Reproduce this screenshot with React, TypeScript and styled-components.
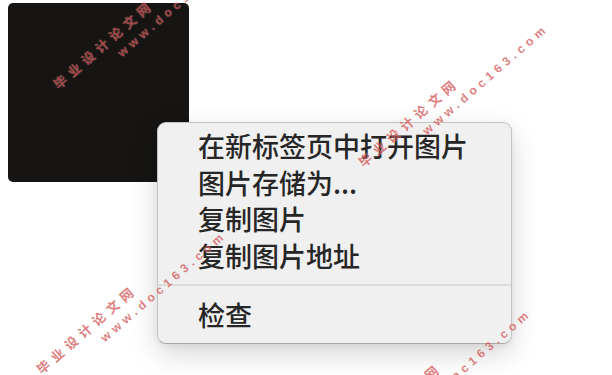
import React from "react";
import styled, { createGlobalStyle } from "styled-components";

const Global = createGlobalStyle`
  html, body { margin: 0; padding: 0; background: #ffffff; }
  body { font-family: "Noto Sans CJK SC", "Noto Sans", sans-serif; }
`;

const Stage = styled.div`
  position: relative;
  width: 612px;
  height: 375px;
  overflow: hidden;
  box-sizing: border-box;
  padding: 3px 0 0 8px;
  background: #ffffff;
`;

const Thumb = styled.div`
  width: 181px;
  height: 179px;
  border-radius: 5px;
  background: #161513;
`;

const Menu = styled.div`
  position: absolute;
  left: 157px;
  top: 122px;
  width: 355px;
  box-sizing: border-box;
  padding: 5px 0 9.5px;
  background: #f0f0f0;
  border: 1px solid #c4c4c4;
  border-bottom-color: #a8a8a8;
  border-radius: 9px;
  box-shadow: 0 10px 28px rgba(0, 0, 0, 0.16), 0 2px 6px rgba(0, 0, 0, 0.06);
  display: flex;
  flex-direction: column;
`;

const Item = styled.div`
  height: 36.5px;
  display: flex;
  align-items: center;
  padding-left: 40px;
  font-family: "Noto Sans CJK SC", sans-serif;
  font-size: 27px;
  font-weight: 500;
  line-height: 36.5px;
  color: #262626;
  white-space: nowrap;
`;

const Separator = styled.div`
  height: 2px;
  margin: 10px 0 11px;
  background: #dadada;
`;

const Watermark = styled.div<{ $x: number; $y: number }>`
  position: absolute;
  left: ${(p) => p.$x - 6.5}px;
  top: ${(p) => p.$y}px;
  transform: rotate(-41deg);
  transform-origin: 6.5px 0;
  pointer-events: none;
  color: rgba(200, 38, 38, 0.6);
  text-shadow: 0 0 1px rgba(255, 255, 255, 0.45);
  white-space: nowrap;
`;

const MarkTitle = styled.div`
  margin-top: -7px;
  height: 14px;
  line-height: 14px;
  font-family: "Noto Sans CJK SC", sans-serif;
  font-weight: 700;
  font-size: 13px;
  letter-spacing: 5.3px;
`;

const MarkUrl = styled.div`
  margin-top: 4px;
  margin-left: 69px;
  height: 14px;
  line-height: 14px;
  font-family: "Liberation Sans", Arial, sans-serif;
  font-weight: 700;
  font-size: 12px;
  letter-spacing: 4.4px;
`;

const items = ["在新标签页中打开图片", "图片存储为...", "复制图片", "复制图片地址"];

const marks = [
  { x: 60, y: 82 },
  { x: 365, y: 160 },
  { x: 43, y: 367 },
  { x: 348, y: 445 },
];

export default function App() {
  return (
    <>
      <Global />
      <Stage>
        <Thumb />
        <Menu>
          {items.map((t) => (
            <Item key={t}>{t}</Item>
          ))}
          <Separator />
          <Item>检查</Item>
        </Menu>
        {marks.map((m, i) => (
          <Watermark key={i} $x={m.x} $y={m.y}>
            <MarkTitle>毕业设计论文网</MarkTitle>
            <MarkUrl>www.doc163.com</MarkUrl>
          </Watermark>
        ))}
      </Stage>
    </>
  );
}
